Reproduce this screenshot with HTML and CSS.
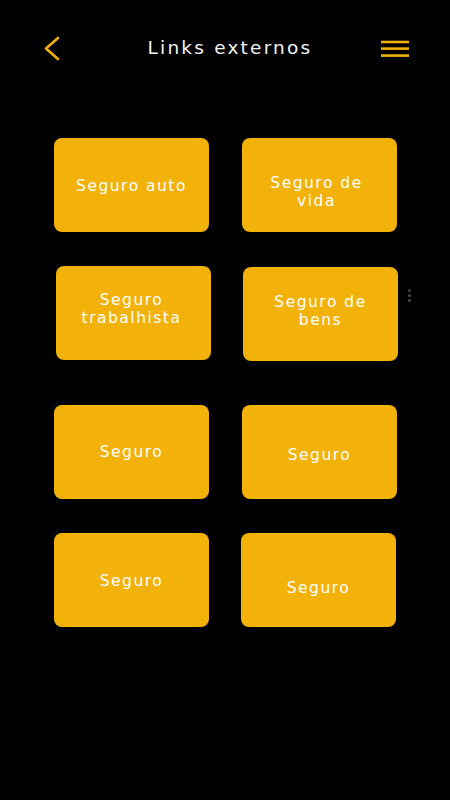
FILE: index.html
```html
<!DOCTYPE html>
<html lang="pt">
<head>
<meta charset="utf-8">
<title>Links externos</title>
<link rel="stylesheet" href="styles.css">
</head>
<body>
<div class="screen">
  <header class="topbar">
    <button class="icon-btn back" aria-label="Voltar">
      <svg width="18" height="26" viewBox="0 0 18 26"><path d="M15 2 L3 12.5 L15 23" fill="none" stroke="#F2B10A" stroke-width="2.6" stroke-linecap="round" stroke-linejoin="round"/></svg>
    </button>
    <h1 class="title">Links externos</h1>
    <button class="icon-btn menu" aria-label="Menu">
      <svg width="28" height="18" viewBox="0 0 28 18"><g stroke="#F2B10A" stroke-width="2.6"><line x1="0" y1="2" x2="28" y2="2"/><line x1="0" y1="8.6" x2="28" y2="8.6"/><line x1="0" y1="15.6" x2="28" y2="15.6"/></g></svg>
    </button>
  </header>

  <main class="grid">
    <a class="card sd1">Seguro auto</a>
    <a class="card sd7">Seguro de<br>vida</a>
    <a class="card r2l su4">Seguro<br>trabalhista</a>
    <a class="card r2r su3">Seguro de<br>bens</a>
    <a class="card r3">Seguro</a>
    <a class="card r3 sd3">Seguro</a>
    <a class="card sd1">Seguro</a>
    <a class="card r4r sd8">Seguro</a>
  </main>

  <div class="scroll-dots"><span></span><span></span><span></span></div>
</div>
</body>
</html>
```

FILE: styles.css
```css
* { box-sizing: border-box; }
html, body { margin: 0; padding: 0; background: #000; }
body {
  font-family: "DejaVu Sans", "Noto Sans", sans-serif;
  color: #fff;
}
.screen {
  position: relative;
  width: 450px;
  height: 800px;
  background: #000;
  overflow: hidden;
}
.topbar {
  display: flex;
  align-items: center;
  justify-content: space-between;
  height: 98px;
  padding: 0 41px 0 43px;
}
.icon-btn {
  background: none;
  border: 0;
  padding: 0;
  display: flex;
  align-items: center;
  cursor: pointer;
}
.back { width: 20px; }
.menu { width: 28px; }
.title {
  margin: 0 0 2px 16px;
  font-size: 18.5px;
  font-weight: normal;
  letter-spacing: 2.2px;
  color: #f4f4f4;
  line-height: 24px;
}
.grid {
  display: grid;
  grid-template-columns: 155px 155px;
  column-gap: 33px;
  row-gap: 34px;
  padding: 40px 0 0 54px;
}
.card {
  display: flex;
  align-items: center;
  justify-content: center;
  width: 155px;
  height: 94px;
  background: #F2B20A;
  border-radius: 8px;
  color: #fff;
  font-size: 15.5px;
  line-height: 18px;
  letter-spacing: 1.5px;
  text-align: center;
  text-decoration: none;
  padding: 0 4px;
}
.r2l { margin-left: 2px; }
.r2r { margin-left: 1px; margin-top: 1px; }
.r3 { margin-top: 10px; }
.r4r { margin-left: -1px; }
.sd1 { padding-top: 2px; }
.sd3 { padding-top: 6px; }
.sd7 { padding-top: 14px; padding-right: 10px; }
.sd8 { padding-top: 16px; }
.su4 { padding-bottom: 8px; padding-right: 8px; }
.su3 { padding-bottom: 6px; }
.scroll-dots {
  position: absolute;
  left: 408px;
  top: 289px;
  display: flex;
  flex-direction: column;
  gap: 2px;
}
.scroll-dots span {
  width: 3px;
  height: 3px;
  border-radius: 50%;
  background: #4a4a4a;
}
```
